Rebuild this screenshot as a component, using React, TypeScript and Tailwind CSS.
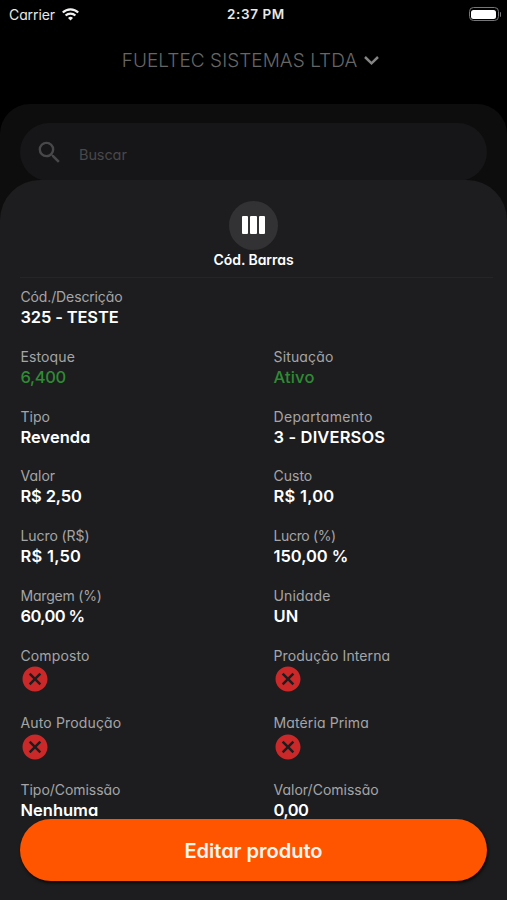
import { MdCancel, MdSearch } from "react-icons/md";

type Field = {
  label: string;
  labelClass?: string;
  value?: string;
  valueClass?: string;
};

const rows: Field[][] = [
  [
    {
      label: "Cód./Descrição",
      labelClass: "tracking-[-0.13px]",
      value: "325 - TESTE",
      valueClass: "font-semibold text-white tracking-[-0.15px]",
    },
  ],
  [
    {
      label: "Estoque",
      labelClass: "tracking-[0.12px]",
      value: "6,400",
      valueClass: "font-medium text-[#2e8b34] tracking-[-0.35px]",
    },
    {
      label: "Situação",
      labelClass: "tracking-[0.15px]",
      value: "Ativo",
      valueClass: "font-medium text-[#2e8b34] tracking-[0.15px]",
    },
  ],
  [
    { label: "Tipo", value: "Revenda" },
    {
      label: "Departamento",
      labelClass: "tracking-[0.32px]",
      value: "3 - DIVERSOS",
      valueClass: "font-semibold text-white tracking-[0.15px]",
    },
  ],
  [
    { label: "Valor", value: "R$ 2,50", valueClass: "font-semibold text-white tracking-[-0.15px]" },
    { label: "Custo", value: "R$ 1,00", valueClass: "font-semibold text-white tracking-[0.25px]" },
  ],
  [
    {
      label: "Lucro (R$)",
      labelClass: "tracking-[-0.08px]",
      value: "R$ 1,50",
      valueClass: "font-semibold text-white tracking-[0.25px]",
    },
    {
      label: "Lucro (%)",
      labelClass: "tracking-[-0.35px]",
      value: "150,00 %",
      valueClass: "font-semibold text-white tracking-[-0.05px]",
    },
  ],
  [
    {
      label: "Margem (%)",
      labelClass: "tracking-[-0.2px]",
      value: "60,00 %",
      valueClass: "font-semibold text-white tracking-[-0.6px]",
    },
    { label: "Unidade", labelClass: "tracking-[0.17px]", value: "UN" },
  ],
  [
    { label: "Composto", labelClass: "tracking-[0.12px]" },
    { label: "Produção Interna", labelClass: "tracking-[0.1px]" },
  ],
  [
    { label: "Auto Produção", labelClass: "tracking-[0.15px]" },
    { label: "Matéria Prima", labelClass: "tracking-[0.12px]" },
  ],
  [
    { label: "Tipo/Comissão", labelClass: "tracking-[-0.04px]", value: "Nenhuma" },
    { label: "Valor/Comissão", value: "0,00", valueClass: "font-semibold text-white tracking-[-0.5px]" },
  ],
];

function FieldCell({ label, labelClass, value, valueClass }: Field) {
  return (
    <div className="w-[253px] shrink-0 whitespace-nowrap">
      <div className={`h-5 text-[14px] leading-5 text-[#a5a5a7] ${labelClass ?? ""}`}>{label}</div>
      {value ? (
        <div className={`h-5 text-[16.5px] leading-5 ${valueClass ?? "font-semibold text-white"}`}>{value}</div>
      ) : (
        <div className="-ml-[0.5px] flex h-[27.4px] items-center">
          <MdCancel className="size-[30px] shrink-0 text-[#cb2929]" />
        </div>
      )}
    </div>
  );
}

function StatusBar() {
  return (
    <div className="grid h-7 grid-cols-3 items-center pr-[6px] pl-[9px] text-[14px] text-[#e8e8e8]">
      <div className="flex items-center gap-[7px]">
        <span className="tracking-[-0.1px]">Carrier</span>
        <svg width="17" height="13" viewBox="0 0 17 13" fill="none" stroke="#f2f2f2" strokeWidth="2.2">
          <path d="M.8 4.6a10.8 10.8 0 0 1 15.4 0" />
          <path d="M3.6 7.6a6.9 6.9 0 0 1 9.8 0" />
          <path d="M8.5 12.6 6 10a3.6 3.6 0 0 1 5 0Z" fill="#f2f2f2" stroke="none" />
        </svg>
      </div>
      <div className="pl-[2px] text-center text-[13.5px] font-semibold tracking-[0.6px] whitespace-nowrap">2:37 PM</div>
      <div className="flex items-center justify-end gap-px">
        <div className="h-[14px] w-[30px] rounded-[4.5px] border border-[#77777a] p-[1.5px]">
          <div className="h-full rounded-[2.5px] bg-white" />
        </div>
        <div className="h-[5px] w-[1.5px] rounded-r bg-[#77777a]" />
      </div>
    </div>
  );
}

export default function App() {
  return (
    <div className="relative flex h-[900px] w-[507px] flex-col overflow-hidden bg-black font-[Inter,sans-serif] [font-feature-settings:'cv11']">
      <StatusBar />
      <header className="flex h-[76px] items-start justify-center gap-[7px] pt-[21px] pr-[6px] text-[#666666]">
        <h1 className="text-[19px] leading-6 font-light tracking-[0.05px] whitespace-nowrap">FUELTEC SISTEMAS LTDA</h1>
        <svg className="mt-[6px]" width="15" height="11" viewBox="0 0 15 11" fill="none" stroke="#858585" strokeWidth="2.5">
          <path d="m1 2 6.5 6.3L14 2" />
        </svg>
      </header>
      <main className="flex min-h-0 flex-1 flex-col rounded-t-[30px] bg-[#0d0d0d] pt-[19px]">
        <div className="mx-5 flex h-[58px] shrink-0 items-center rounded-full bg-[#161618] pl-[15px]">
          <MdSearch className="size-[29px] text-[#48484a]" />
          <span className="mt-[6px] ml-[15px] text-[14.5px] tracking-[-0.1px] text-[#48484a]">Buscar</span>
        </div>
        <section className="-mt-px flex min-h-0 flex-1 flex-col overflow-hidden rounded-t-[40px] bg-[#1d1d1f] pt-[20.5px]">
          <div className="flex h-[76px] shrink-0 flex-col items-center">
            <div className="flex size-[49px] shrink-0 items-center justify-center gap-[2px] rounded-full bg-[#323234]">
              <div className="h-[18px] w-[6.5px] rounded-[1px] bg-white" />
              <div className="h-[18px] w-[6.5px] rounded-[1px] bg-white" />
              <div className="h-[18px] w-[6.5px] rounded-[1px] bg-white" />
            </div>
            <div className="text-[14px] leading-5 font-semibold tracking-[-0.05px] text-white">Cód. Barras</div>
          </div>
          <div className="mr-[14px] ml-5 h-px shrink-0 bg-[#252527]" />
          <div className="mt-[9.5px] flex min-h-0 flex-1 flex-col gap-[19.8px] pl-[20.5px]">
            {rows.map((row) => (
              <div className="flex shrink-0" key={row[0].label}>
                {row.map((field) => (
                  <FieldCell key={field.label} {...field} />
                ))}
              </div>
            ))}
          </div>
        </section>
      </main>
      <button className="absolute top-[819px] left-[20px] h-[62px] w-[467px] rounded-full bg-[#ff5500] pt-[2px] text-[20px] font-semibold text-[#fff5ee] shadow-[1px_2px_3px_rgba(0,0,0,0.7)]">
        Editar produto
      </button>
    </div>
  );
}
